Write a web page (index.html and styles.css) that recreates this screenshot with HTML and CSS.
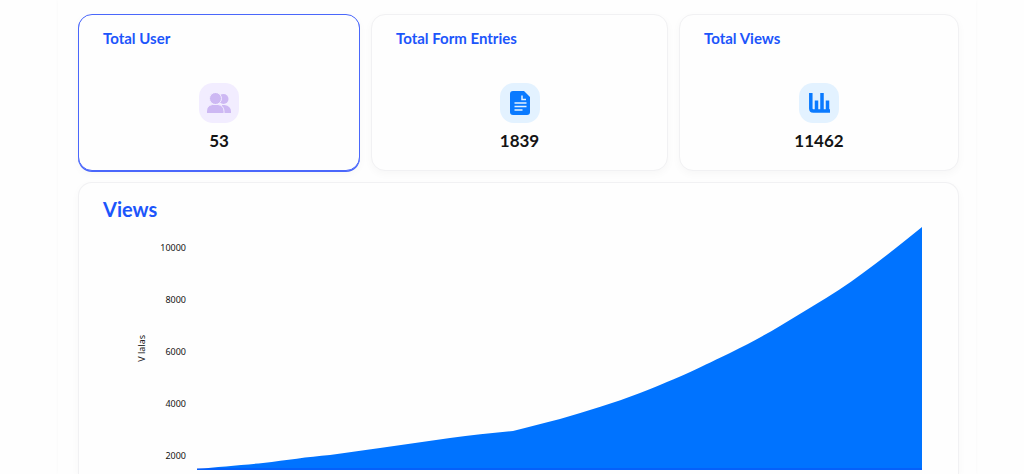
FILE: index.html
```html
<!DOCTYPE html>
<html lang="en">
<head>
    <meta charset="UTF-8">
    <meta name="viewport" content="width=device-width, initial-scale=1.0">
    <title>Dashboard</title>
    <link rel="stylesheet" href="styles.css">
</head>
<body>
    <main class="panel">
        <!-- Summary cards -->
        <section class="stats">
            <article class="card stat active">
                <h2 class="stat-title">Total User</h2>
                <div class="stat-body">
                    <span class="stat-icon users">
                        <svg width="24" height="21" viewBox="0 0 24 21" fill="#cdb8f3">
                            <circle cx="16.500" cy="6" r="5"/>
                            <path d="M15 20v-8h2.500q6.500 1 6.500 6.500V20z"/>
                            <g stroke="#f2edff" stroke-width="1">
                                <circle cx="8.500" cy="5.500" r="6"/>
                                <path d="M-.5 20.500v-2q0-6 6-7h5.500q6 1 6 7v2z"/>
                            </g>
                        </svg>
                    </span>
                    <strong class="stat-value">53</strong>
                </div>
            </article>
            <article class="card stat">
                <h2 class="stat-title">Total Form Entries</h2>
                <div class="stat-body">
                    <span class="stat-icon">
                        <svg width="20" height="24" viewBox="0 0 20 24">
                            <path fill="#0a7aff" d="M3 0h11l6 6v15q0 3-3 3H3q-3 0-3-3V3q0-3 3-3z"/>
                            <path fill="none" stroke="#e3f2ff" stroke-width="1.500" d="M12 4.500v4h4M4.500 12h12M4.500 15.500h12M4.500 19h8"/>
                        </svg>
                    </span>
                    <strong class="stat-value">1839</strong>
                </div>
            </article>
            <article class="card stat">
                <h2 class="stat-title">Total Views</h2>
                <div class="stat-body">
                    <span class="stat-icon">
                        <svg width="21" height="20" viewBox="0 0 21 20" fill="none" stroke="#0a7aff">
                            <path stroke-width="3.500" d="M1.800 0v15.500q0 2.500 2.500 2.500H21"/>
                            <path stroke-width="3.500" d="M7.500 7.500V18M13 0v18M18.500 7.500V18"/>
                        </svg>
                    </span>
                    <strong class="stat-value">11462</strong>
                </div>
            </article>
        </section>

        <!-- Views chart -->
        <section class="card views">
            <h1 class="views-title">Views</h1>
            <div class="chart">
                <span class="axis-name">V lalas</span>
                <ul class="ticks">
                    <li>10000</li>
                    <li>8000</li>
                    <li>6000</li>
                    <li>4000</li>
                    <li>2000</li>
                </ul>
                <svg class="plot" viewBox="0 0 725 243" preserveAspectRatio="none">
                    <path class="area" d="M0 242C20 240 45 238 66 236C90 233 110 230 133 228C150 226 166 223 183 221L253 211C275 208 295 206 316 204C332 200 347 196 363 192C390 184 417 176 443 166C482 151 508 138 533 126C551 117 568 108 583 99L616 79C634 68 650 58 666 46C687 31 706 15 725 0V243H0z"/>
                    <path class="baseline" d="M0 242H725"/>
                </svg>
            </div>
        </section>
    </main>
</body>
</html>
```
FILE: styles.css
```css
* {
    box-sizing: border-box;
}

body {
    margin: 0;
    background-color: #fefefe;
    font-family: Lato, "Open Sans", sans-serif;
    color: #141414;
}

/* White sheet holding the whole dashboard */
.panel {
    display: flex;
    flex-direction: column;
    gap: 11px;
    height: 100vh;
    margin: 0 48px 0 58px;
    padding: 14px 17px 0 20px;
    background-color: #fefefe;
    box-shadow: 0 0 4px rgba(0, 0, 0, 0.03);
    overflow: hidden;
}

.card {
    background-color: #fefefe;
    border: 1px solid #f1f1f3;
    border-radius: 14px;
    box-shadow: 0 3px 8px rgba(0, 0, 0, 0.03);
}

/* Summary cards */
.stats {
    display: grid;
    grid-template-columns: 282fr 297fr 280fr;
    gap: 11px;
}

.stat {
    padding: 13px 24px 16px;
}

.stat.active {
    border-color: #4a67fb;
    box-shadow: 0 1px 0 #4a67fb, 0 3px 8px rgba(0, 0, 0, 0.03);
}

.stat-title {
    margin: 0;
    font-size: 15px;
    line-height: 20px;
    font-weight: 700;
    color: #1c55fb;
}

.stat-body {
    display: flex;
    flex-direction: column;
    align-items: center;
    gap: 5px;
    padding-top: 35px;
}

.stat-icon {
    display: flex;
    align-items: center;
    justify-content: center;
    width: 40px;
    height: 40px;
    border-radius: 14px;
    background-color: #e3f2ff;
}

.stat-icon.users {
    background-color: #f2edff;
}

.stat-value {
    font-size: 17px;
    line-height: 26px;
}

/* Views chart */
.views {
    flex: 1;
    min-height: 292px;
    padding: 12px 36px 0 24px;
    border-bottom: none;
    border-radius: 14px 14px 0 0;
}

.views-title {
    margin: 0;
    font-size: 20px;
    line-height: 28px;
    font-weight: 700;
    color: #1c55fb;
}

.chart {
    display: flex;
    align-items: flex-start;
    padding: 4px 0 0 30px;
}

.axis-name {
    align-self: center;
    width: 18px;
    font-family: "Noto Sans", sans-serif;
    font-size: 9px;
    line-height: 18px;
    writing-mode: vertical-rl;
    transform: rotate(180deg);
}

.ticks {
    display: flex;
    flex-direction: column;
    gap: 38px;
    width: 35px;
    margin: 0 11px 0 0;
    padding: 14px 0 0;
    list-style: none;
    text-align: right;
    font-family: "Noto Sans", sans-serif;
    font-size: 9px;
    line-height: 14px;
}

.plot {
    flex: 1;
    min-width: 0;
    height: 243px;
}

.area {
    fill: #0073ff;
}

.baseline {
    fill: none;
    stroke: #0a4ff5;
    stroke-width: 1;
}
```
